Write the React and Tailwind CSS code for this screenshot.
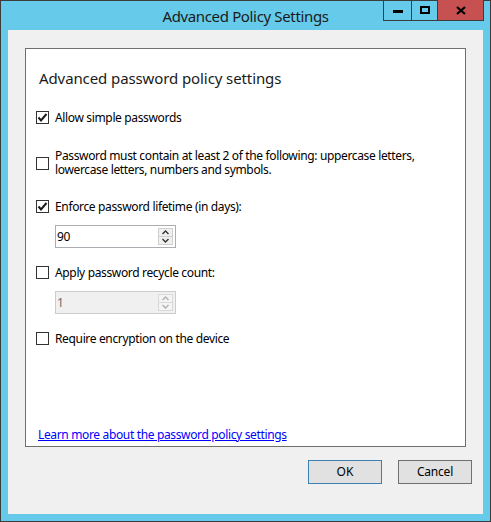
import React from "react";

const font = { fontFamily: '"Noto Sans", "Open Sans", sans-serif' };

function Check({ checked }) {
  return (
    <div className="w-[13px] h-[13px] border border-[#333333] bg-white flex items-center justify-center shrink-0">
      {checked && (
        <svg width="11" height="11" viewBox="0 0 11 11">
          <path d="M1.5 5.5 L4 8.5 L9.5 2" fill="none" stroke="#1a1a1a" strokeWidth="2" />
        </svg>
      )}
    </div>
  );
}

function Arrow({ up, color }) {
  return (
    <svg width="7" height="5" viewBox="0 0 7 5">
      <path
        d={up ? "M0.5 4 L3.5 1 L6.5 4" : "M0.5 1 L3.5 4 L6.5 1"}
        fill="none"
        stroke={color}
        strokeWidth="1.4"
      />
    </svg>
  );
}

function Spin({ value, disabled }) {
  return (
    <div
      className={
        "ml-[19px] w-[121px] h-[23px] border flex items-stretch " +
        (disabled ? "border-[#cccccc] bg-[#f0f0f0]" : "border-[#abadb3] bg-white")
      }
    >
      <div
        className={
          "flex-1 pl-[1px] text-[12px] leading-[21px] tracking-[-0.3px] " +
          (disabled ? "text-[#6d6d6d]" : "text-black")
        }
      >
        {value}
      </div>
      <div className="flex flex-col justify-center mr-[2px] py-[2px] gap-0">
        <div
          className={
            "w-[15px] h-[10px] border flex items-center justify-center " +
            (disabled ? "border-[#d9d9d9] bg-[#f4f4f4]" : "border-[#cfcfcf] bg-[#f0f0f0]")
          }
        >
          <Arrow up color={disabled ? "#b0b0b0" : "#333333"} />
        </div>
        <div
          className={
            "w-[15px] h-[9px] border border-t-0 flex items-center justify-center " +
            (disabled ? "border-[#d9d9d9] bg-[#f4f4f4]" : "border-[#cfcfcf] bg-[#f0f0f0]")
          }
        >
          <Arrow color={disabled ? "#b0b0b0" : "#333333"} />
        </div>
      </div>
    </div>
  );
}

function Row({ checked, children, className = "" }) {
  return (
    <div className={"flex items-center gap-[6px] " + className}>
      <Check checked={checked} />
      <div className="text-[12px] leading-[14px] tracking-[-0.35px] text-black">{children}</div>
    </div>
  );
}

export default function App() {
  return (
    <div
      className="w-[491px] h-[522px] bg-[#66cbea] border border-[#3c3c3c] flex flex-col"
      style={font}
    >
      {/* Title bar */}
      <div className="h-[29px] flex items-start relative shrink-0">
        <div className="absolute left-0 right-0 top-[5px] text-center text-[15px] leading-[20px] tracking-[-0.35px] text-[#1a1a1a]">
          Advanced Policy Settings
        </div>
        <div className="ml-auto mr-[6px] flex h-[21px] -mt-[1px] border border-[#3c3c3c] border-t-0 relative">
          <div className="w-[28px] flex items-center justify-center border-r border-[#3c3c3c]">
            <div className="w-[10px] h-[3px] bg-black mt-[2px]" />
          </div>
          <div className="w-[26px] flex items-center justify-center border-r border-[#3c3c3c]">
            <div className="w-[10px] h-[8px] border-2 border-black" />
          </div>
          <div className="w-[45px] bg-[#c75050] flex items-center justify-center">
            <svg width="10" height="9" viewBox="0 0 10 9">
              <path d="M1 1 L9 8 M9 1 L1 8" stroke="black" strokeWidth="2.2" />
            </svg>
          </div>
        </div>
      </div>

      {/* Client */}
      <div className="mx-[7px] mb-[7px] flex-1 bg-[#f0f0f0] flex flex-col">
        <div className="mt-[18px] mx-[17px] h-[399px] bg-white border border-[#6f6f6f] flex flex-col pl-[10px]">
          <div className="mt-[19px] ml-[3px] h-[20px] text-[15px] leading-[20px] tracking-[-0.1px] text-[#1a1a1a]">
            Advanced password policy settings
          </div>
          <Row checked className="mt-[23px] h-[13px]">
            Allow simple passwords
          </Row>
          <Row className="mt-[25px]">
            Password must contain at least 2 of the following: uppercase letters,
            <br />
            lowercase letters, numbers and symbols.
          </Row>
          <Row checked className="mt-[23px] h-[13px]">
            Enforce password lifetime (in days):
          </Row>
          <div className="mt-[12px]">
            <Spin value="90" />
          </div>
          <Row className="mt-[18px] h-[13px]">Apply password recycle count:</Row>
          <div className="mt-[12px]">
            <Spin value="1" disabled />
          </div>
          <Row className="mt-[18px] h-[13px]">Require encryption on the device</Row>
          <div className="flex-1" />
          <div className="ml-[2px] mb-[4px] text-[12px] leading-[14px] tracking-[-0.35px] text-[#0000ff] underline">
            Learn more about the password policy settings
          </div>
        </div>
        <div className="mt-[13px] mr-[11px] flex justify-end gap-[16px]">
          <div className="w-[74px] h-[24px] border border-[#3c7fb1] bg-[#e1e1e1] flex items-center justify-center text-[12px] text-black">
            OK
          </div>
          <div className="w-[74px] h-[24px] border border-[#707070] bg-[#e1e1e1] flex items-center justify-center text-[12px] tracking-[-0.2px] text-black">
            Cancel
          </div>
        </div>
      </div>
    </div>
  );
}
